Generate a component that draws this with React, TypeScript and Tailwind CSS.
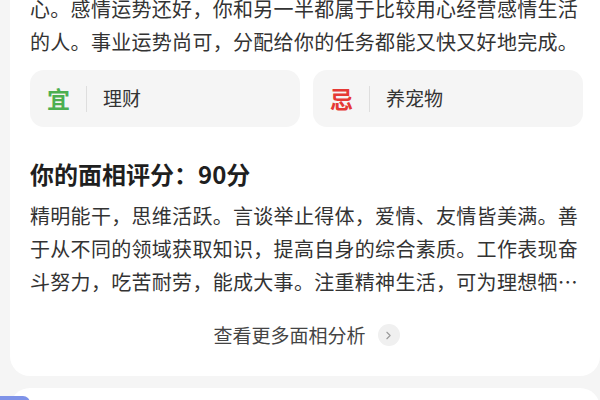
import { ChevronRight } from 'lucide-react';

const intro = [
  '心。感情运势还好，你和另一半都属于比较用心经营感情生活',
  '的人。事业运势尚可，分配给你的任务都能又快又好地完成。',
];

const faceText = [
  '精明能干，思维活跃。言谈举止得体，爱情、友情皆美满。善',
  '于从不同的领域获取知识，提高自身的综合素质。工作表现奋',
  '斗努力，吃苦耐劳，能成大事。注重精神生活，可为理想牺…',
];

function TipBox({ mark, color, text }: { mark: string; color: string; text: string }) {
  return (
    <div className="flex h-[57px] flex-1 items-center rounded-[14px] bg-[#f5f5f5] pl-[17px]">
      <span className={`text-[23px] font-bold leading-none ${color}`}>{mark}</span>
      <span className="mx-[16px] h-[26px] w-px bg-[#dedede]" />
      <span className="text-[19px] text-[#333]">{text}</span>
    </div>
  );
}

export default function App() {
  return (
    <div
      className="h-[400px] w-[600px] overflow-hidden bg-[#f5f5f5]"
      style={{ fontFamily: '"Noto Sans CJK SC", "Noto Sans", sans-serif' }}
    >
      {/* 面相卡片 */}
      <div className="-mt-[24px] ml-[10px] rounded-[20px] bg-white pb-[27px] pl-[20px] pr-[17px] pt-[16px]">
        <div className="text-[20px] leading-[33px] tracking-[0.3px] text-[#333]">
          {intro.map((line) => (
            <div key={line} className="whitespace-nowrap">{line}</div>
          ))}
        </div>

        <div className="mt-[12px] flex gap-[13px]">
          <TipBox mark="宜" color="text-[#4caf50]" text="理财" />
          <TipBox mark="忌" color="text-[#e53935]" text="养宠物" />
        </div>

        <h2 className="mt-[31px] text-[24px] font-bold leading-[32px] text-[#1f1f1f]">
          你的面相评分：90分
        </h2>

        <div className="mt-[9px] text-[20px] leading-[33px] tracking-[0.3px] text-[#333]">
          {faceText.map((line) => (
            <div key={line} className="whitespace-nowrap">{line}</div>
          ))}
        </div>

        <div className="mt-[23px] flex items-center justify-center gap-[12px]">
          <span className="text-[19px] leading-[28px] text-[#444]">查看更多面相分析</span>
          <span className="flex h-[22px] w-[22px] items-center justify-center rounded-full bg-[#f0f0f0]">
            <ChevronRight className="h-[13px] w-[13px] text-[#999]" strokeWidth={2} />
          </span>
        </div>
      </div>

      {/* 下一张卡片 */}
      <div className="mt-[12px] ml-[10px] h-[40px] rounded-t-[20px] bg-white pt-[8px]">
        <div className="-ml-[20px] h-[14px] w-[40px] rounded-full bg-[#7f93e8]" />
      </div>
    </div>
  );
}
